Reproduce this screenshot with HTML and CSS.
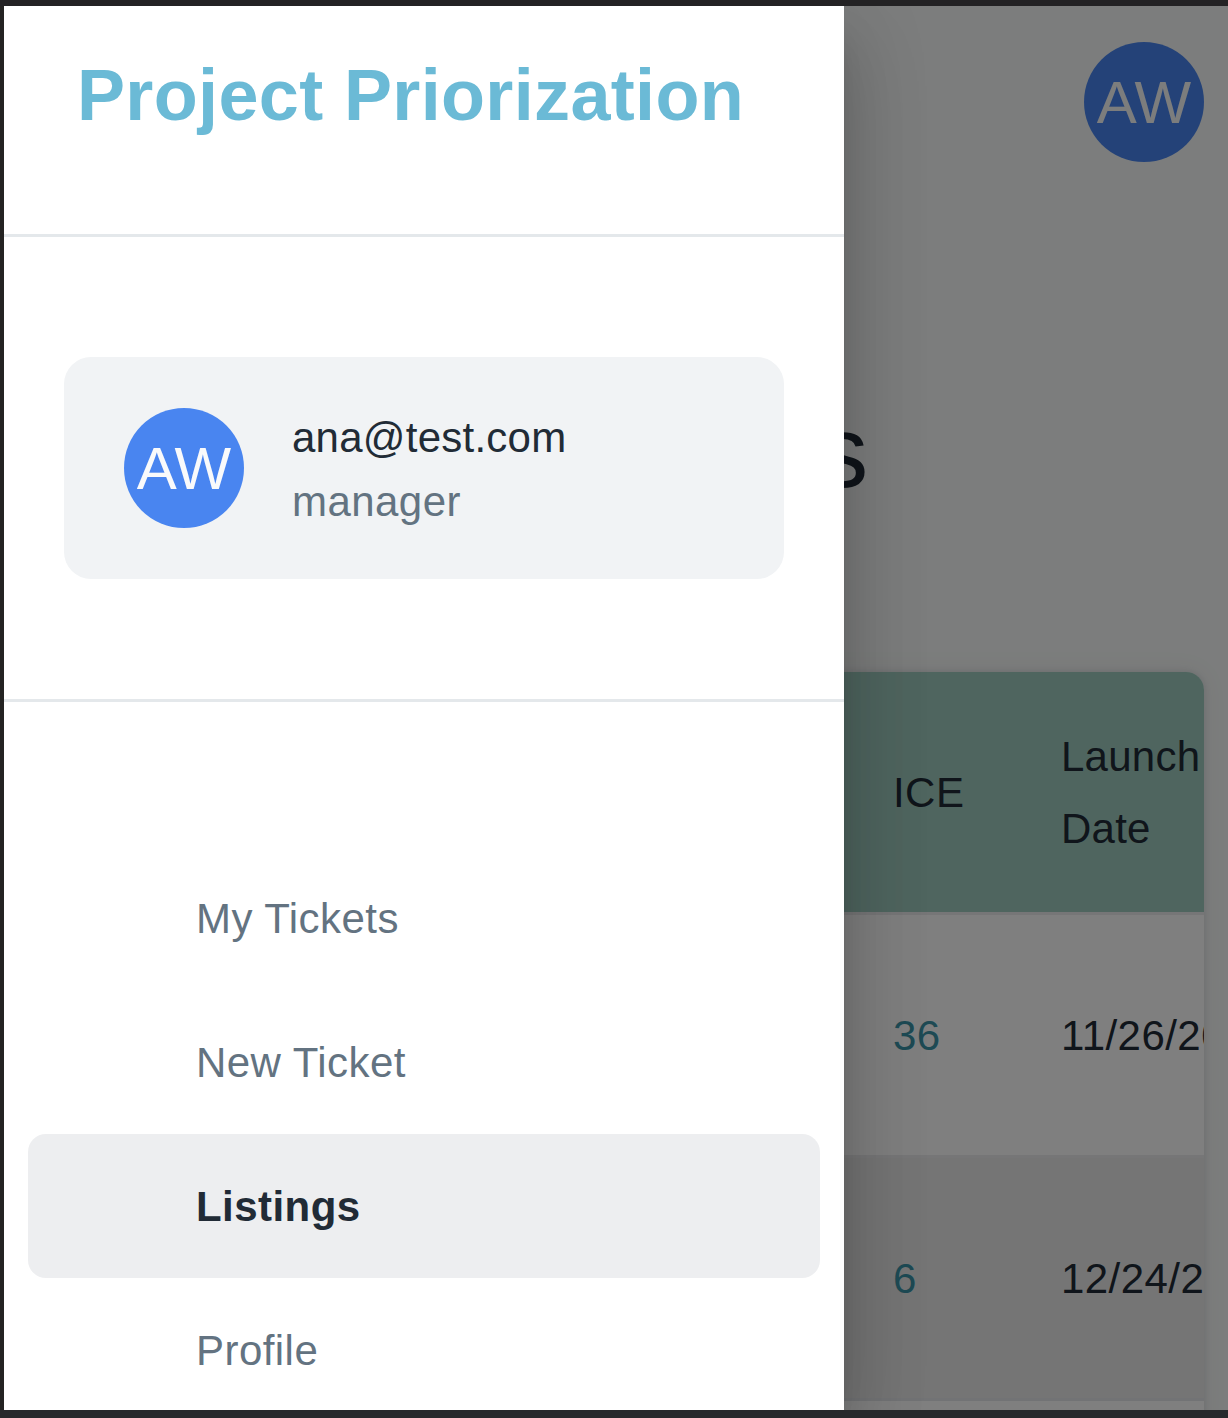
FILE: index.html
```html
<!DOCTYPE html>
<html lang="en">
<head>
<meta charset="utf-8">
<title>Project Priorization</title>
<link rel="stylesheet" href="styles.css">
</head>
<body>
<div class="app">
  <main class="page">
    <header class="topbar"><div class="avatar">AW</div></header>
    <h1 class="page-title">s</h1>
    <div class="table">
      <div class="row row-head"><span></span><span>ICE</span><span class="launch">Launch Date</span></div>
      <div class="row"><span></span><span class="score">36</span><span class="date">11/26/20</span></div>
      <div class="row row-alt"><span></span><span class="score">6</span><span class="date">12/24/2</span></div>
      <div class="row"></div>
    </div>
  </main>
  <div class="backdrop"></div>
  <aside class="drawer">
    <div class="brand">Project Priorization</div>
    <section class="account">
      <div class="account-card">
        <div class="avatar">AW</div>
        <div class="account-text">
          <div class="email">ana@test.com</div>
          <div class="role">manager</div>
        </div>
      </div>
    </section>
    <nav class="menu">
      <a class="menu-item">My Tickets</a>
      <a class="menu-item">New Ticket</a>
      <a class="menu-item active">Listings</a>
      <a class="menu-item">Profile</a>
    </nav>
  </aside>
</div>
</body>
</html>
```

FILE: styles.css
```css
* { box-sizing: border-box; }

body {
  margin: 0;
  height: 1418px;
  overflow: hidden;
  background: linear-gradient(#232224 0 6px, #242322 6px 1410px, #27282c 1410px);
  padding: 6px 0 8px 4px;
  font-family: "Liberation Sans", Helvetica, Arial, sans-serif;
  font-size: 42px;
  line-height: 72px;
  letter-spacing: 0.45px;
  color: #212b36;
}

/* Page, backdrop and drawer share one grid cell and stack in order. */
.app {
  display: grid;
  grid-template: 1404px / 1224px;
  overflow: hidden;
}

.page, .backdrop, .drawer { grid-area: 1 / 1; min-width: 0; }

.page {
  overflow: hidden;
  background: #f8fbfa;
  padding: 36px 24px 0;
}

.topbar { display: flex; justify-content: flex-end; }

.avatar {
  flex: none;
  width: 120px;
  height: 120px;
  border-radius: 50%;
  background: #4985f0;
  color: #f9fafb;
  display: flex;
  align-items: center;
  justify-content: center;
  padding-top: 1px;
  font-size: 60px;
  line-height: 60px;
  letter-spacing: 0;
}

.page-title {
  margin: 227px 0 0;
  width: 841px;
  text-align: right;
  font-size: 102px;
  line-height: 126px;
  font-weight: 400;
  letter-spacing: 0.75px;
}

.table {
  margin-top: 157px;
  height: 900px;
  border-radius: 18px 18px 0 0;
  overflow: hidden;
  background: #fff;
  box-shadow: 0 0 6px rgba(145, 158, 171, 0.3), 0 0 24px rgba(120, 70, 70, 0.08);
}

.row {
  height: 243px;
  display: grid;
  grid-template-columns: 816px 168px 192px;
  align-items: center;
  border-bottom: 3px solid #ededef;
  background: #fff;
}

.row span { padding: 2px 0 0 49px; white-space: nowrap; }
.row .launch { white-space: normal; letter-spacing: 0.25px; }
.row-head { background: #9ecbbe; }
.row-alt { background: #ebebeb; border-color: #e4e6ea; }
.row .score { color: #3d95a8; }

.backdrop { position: relative; background: rgba(0, 0, 0, 0.5); }

.drawer {
  position: relative;
  width: 840px;
  background: #fff;
  box-shadow:
    0 24px 30px -15px rgba(0, 0, 0, 0.2),
    0 48px 72px 6px rgba(0, 0, 0, 0.14),
    0 18px 84px 9px rgba(0, 0, 0, 0.09);
}

.brand {
  height: 231px;
  padding: 53px 0 0 73px;
  border-bottom: 3px solid #e4e8eb;
  font-size: 72px;
  font-weight: 700;
  color: #6bbad6;
  letter-spacing: 0.35px;
}

.account {
  height: 465px;
  padding: 120px 60px 0;
  border-bottom: 3px solid #e4e8eb;
}

.account-card {
  height: 222px;
  padding: 0 60px;
  display: flex;
  align-items: center;
  gap: 48px;
  border-radius: 27px;
  background: #f1f3f5;
}

.account-text { line-height: 64px; padding-top: 4px; }
.email { letter-spacing: 0.25px; }
.role { color: #637381; }

.menu { padding: 144px 24px 0; }

.menu-item {
  display: flex;
  align-items: center;
  height: 144px;
  padding: 2px 0 0 168px;
  border-radius: 18px;
  color: #637381;
}

.active {
  background: #edeef0;
  color: #212b36;
  font-weight: 700;
}
```
